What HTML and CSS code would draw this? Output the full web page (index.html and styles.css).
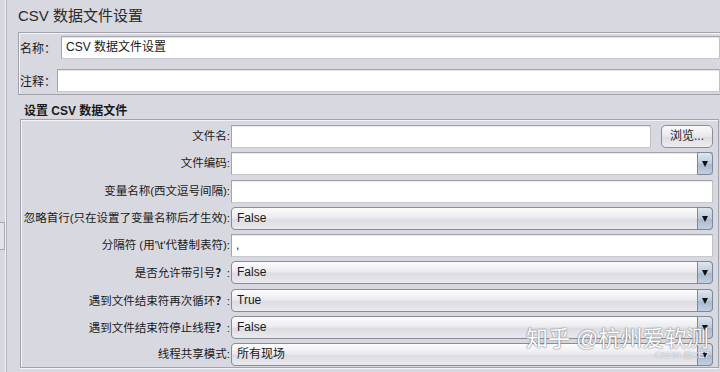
FILE: index.html
```html
<!DOCTYPE html>
<html lang="zh-cn">

<head>
    <meta charset="UTF-8">
    <title>CSV 数据文件设置</title>
    <link rel="stylesheet" href="styles.css">
</head>

<body>
    <div class="frame">
        <div class="side"><div class="side-knob"></div></div>
        <div class="main">
            <div class="title">CSV 数据文件设置</div>

            <div class="name-panel">
                <div class="name-row">
                    <span class="name-label">名称：</span>
                    <div class="field">CSV 数据文件设置</div>
                </div>
                <div class="name-row comment">
                    <span class="name-label">注释：</span>
                    <div class="field"></div>
                </div>
            </div>

            <div class="group-title">设置 CSV 数据文件</div>
            <div class="group">
                <label class="lbl">文件名:</label>
                <div class="file-row">
                    <div class="field"></div>
                    <div class="btn">浏览...</div>
                </div>

                <label class="lbl">文件编码:</label>
                <div class="field editable">
                    <span class="arrow"></span>
                </div>

                <label class="lbl">变量名称(西文逗号间隔):</label>
                <div class="field"></div>

                <label class="lbl">忽略首行(只在设置了变量名称后才生效):</label>
                <div class="combo">False<span class="arrow"></span></div>

                <label class="lbl">分隔符 (用'\t'代替制表符):</label>
                <div class="field">,</div>

                <label class="lbl">是否允许带引号<b>？</b>:</label>
                <div class="combo">False<span class="arrow"></span></div>

                <label class="lbl">遇到文件结束符再次循环<b>？</b>:</label>
                <div class="combo">True<span class="arrow"></span></div>

                <label class="lbl">遇到文件结束符停止线程<b>？</b>:</label>
                <div class="combo">False<span class="arrow"></span></div>

                <label class="lbl">线程共享模式:</label>
                <div class="combo">所有现场<span class="arrow"></span></div>
            </div>
        </div>
    </div>

    <!-- 水印 -->
    <div class="watermark">知乎 @杭州爱软测</div>
    <div class="watermark-small">CSDN @XE7</div>
</body>

</html>
```

FILE: styles.css
```css
html,
body {
    margin: 0;
    width: 720px;
    height: 372px;
    overflow: hidden;
    background-color: #d8d8e0;
}

* {
    box-sizing: border-box;
    font-family: "Liberation Sans", "Noto Sans CJK SC", sans-serif;
    font-size: 12px;
    color: #1a1a1a;
}

.frame {
    display: flex;
    height: 372px;
}

.side {
    width: 7px;
    border-right: 1px solid #b4b4bc;
    box-shadow: inset -1px 0 0 #f2f2f6;
    padding-top: 222px;
}

.side-knob {
    height: 28px;
    width: 5px;
    border: 1px solid #a8a8b0;
    border-left: none;
    background-color: #e2e2e8;
}

.main {
    flex: 1;
    padding: 7px 0 0 11px;
    position: relative;
}

.title {
    font-size: 15px;
    line-height: 18px;
    height: 18px;
    color: #2a2a2a;
    margin-bottom: 7px;
}

.field {
    height: 23px;
    background-color: #fff;
    border: 1px solid #a4a4ac;
    border-bottom-color: #c8c8d0;
    border-right-color: #c0c0c8;
    box-shadow: inset 0 1px 0 #e6e6ec;
    line-height: 21px;
    padding-left: 4px;
    position: relative;
}

/* 名称 / 注释 */
.name-panel {
    border: 1px solid #a2a2aa;
    border-right: none;
    box-shadow: inset 1px 1px 0 #f4f4f8;
    margin-right: -2px;
    padding: 3px 1px 1px 1px;
    height: 63px;
}

.name-row {
    display: flex;
    align-items: center;
}

.name-row.comment {
    margin-top: 10px;
}

.name-row .field {
    flex: 1;
    margin-right: 1px;
}

.name-label {
    width: 41px;
    font-size: 12px;
}

.comment .name-label {
    width: 37px;
}

.group-title {
    font-weight: bold;
    margin: 9px 0 0 6px;
    height: 15px;
    line-height: 15px;
}

/* 设置 CSV 数据文件 */
.group {
    margin: 0 0 0 2px;
    width: 699px;
    height: 249px;
    border: 1px solid #a2a2aa;
    box-shadow: inset 1px 1px 0 #f4f4f8, 0 1px 0 #f4f4f8;
    padding: 5px 5px 2px 0;
    display: grid;
    grid-template-columns: 210px 1fr;
    grid-auto-rows: 23px;
    row-gap: 4.25px;
}

.lbl {
    text-align: right;
    line-height: 23px;
    padding-right: 1px;
    white-space: nowrap;
    font-size: 11.5px;
}

.lbl b {
    font-size: 11.5px;
    font-family: "Noto Sans CJK SC", sans-serif;
}

.file-row {
    display: flex;
    gap: 10px;
}

.file-row .field {
    flex: 1;
}

.btn {
    width: 52px;
    height: 23px;
    border: 1px solid #8c8c94;
    border-radius: 5px;
    background: linear-gradient(#fbfbfc, #e8e8ec 50%, #dcdce2 55%, #eeeef2);
    text-align: center;
    line-height: 21px;
}

.combo {
    height: 23px;
    border: 1px solid #8a8b93;
    border-radius: 4px;
    background: linear-gradient(#fcfcfd, #ececf0 45%, #dcdce2 55%, #e9e9ee);
    line-height: 21px;
    padding-left: 5px;
    position: relative;
}

.arrow {
    position: absolute;
    top: -1px;
    right: -1px;
    width: 16px;
    height: 23px;
    border: 1px solid #7e8898;
    border-radius: 0 4px 4px 0;
    background: linear-gradient(#dfe6ef, #bccada 50%, #a9bad0 55%, #c2cfdf);
}

.arrow::after {
    content: "";
    position: absolute;
    left: 4px;
    top: 8px;
    border-left: 3.5px solid transparent;
    border-right: 3.5px solid transparent;
    border-top: 6px solid #111;
}

.editable {
    padding-right: 16px;
}

.watermark {
    position: absolute;
    left: 526px;
    top: 325px;
    font-size: 22px;
    line-height: 28px;
    color: #fff;
    text-shadow: 0 0 1px #6a6a74, 0 0 2px #8a8a94;
    white-space: nowrap;
}

.watermark-small {
    position: absolute;
    left: 655px;
    top: 350px;
    font-size: 9px;
    line-height: 10px;
    color: #f4f4f6;
    text-shadow: 0 0 1px #7a7a84;
}
```
